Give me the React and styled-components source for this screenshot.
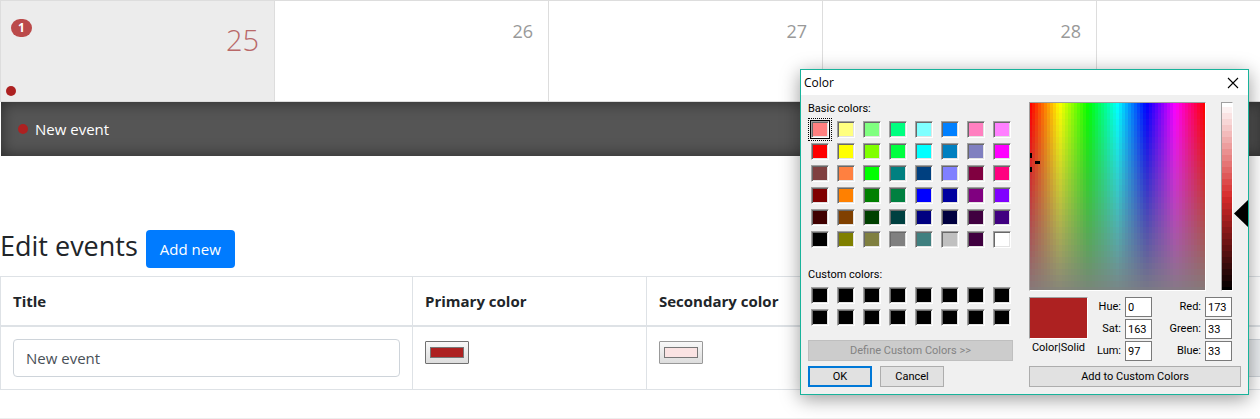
import React, { useState } from "react";
import styled, { createGlobalStyle } from "styled-components";

const GlobalStyle = createGlobalStyle`
  *, *::before, *::after { box-sizing: border-box; }
  body {
    margin: 0;
    background: #fff;
    color: #212529;
    font-family: "Open Sans", "Noto Sans", sans-serif;
    font-size: 15px;
    line-height: 24px;
    overflow: hidden;
  }
  button, input { font-family: inherit; }
`;

const Page = styled.main`
  position: relative;
  overflow: hidden;
`;

const Week = styled.div`
  display: grid;
  grid-template-columns: repeat(7, minmax(274px, 1fr));
  border-left: 1px solid #ddd;
`;

const Day = styled.div`
  display: flex;
  flex-direction: column;
  justify-content: space-between;
  height: 102px;
  padding: 18px 15px 5px 5px;
  border: solid #ddd;
  border-width: 1px 1px 1px 0;
  background: ${(p) => (p.$active ? "#ececec" : "#fff")};
`;

const DayTop = styled.div`
  display: flex;
  justify-content: space-between;
  align-items: flex-start;
`;

const DayNumber = styled.span`
  margin-left: auto;
  font-weight: ${(p) => (p.$active ? 300 : 400)};
  font-size: ${(p) => (p.$active ? "29px" : "18px")};
  line-height: ${(p) => (p.$active ? "42px" : "24px")};
  color: ${(p) => (p.$active ? "#b96868" : "#999")};
`;

const Badge = styled.span`
  margin-left: 5px;
  padding: 3px 7px;
  border-radius: 10px;
  background: #bb4a4a;
  color: #fff;
  font-size: 12px;
  font-weight: 700;
  line-height: 12px;
`;

const Dot = styled.span`
  flex: none;
  width: 10px;
  height: 10px;
  border-radius: 50%;
  background: #ad2121;
`;

const EventBar = styled.div`
  display: flex;
  align-items: center;
  gap: 7px;
  height: 54px;
  margin-left: 1px;
  padding: 0 17px;
  background: #555;
  box-shadow: inset 0 0 15px rgba(0, 0, 0, 0.5);
`;

const EventLink = styled.a`
  color: #fff;
  text-decoration: none;
`;

const Heading = styled.h3`
  display: flex;
  align-items: flex-start;
  gap: 8px;
  margin: 74px 0 8px;
  font-size: 27px;
  font-weight: 500;
  line-height: 32px;
`;

const AddButton = styled.button`
  height: 38px;
  padding: 0 14px;
  border: 0;
  border-radius: 4px;
  background: #007bff;
  color: #fff;
  font-size: 15px;
`;

const Table = styled.table`
  width: 100%;
  table-layout: fixed;
  border-collapse: collapse;
  margin-bottom: 28px;
`;

const HeadCell = styled.th`
  width: ${(p) => p.$width};
  height: 49px;
  padding: 0 12px;
  border: 1px solid #dee2e6;
  border-right-width: ${(p) => (p.$last ? 0 : "1px")};
  border-bottom-width: 2px;
  text-align: left;
  font-weight: 700;
`;

const Cell = styled.td`
  padding: 12px ${(p) => (p.$last ? 0 : "12px")} 12px 12px;
  border: 1px solid #dee2e6;
  border-right-width: ${(p) => (p.$last ? 0 : "1px")};
  vertical-align: top;
`;

const TextInput = styled.input`
  display: block;
  width: 100%;
  height: 38px;
  padding: 0 12px;
  border: 1px solid #ced4da;
  border-radius: 4px;
  background: #fff;
  color: #495057;
  font-size: 15px;
  &:disabled {
    border-right: 0;
    border-radius: 4px 0 0 4px;
    background: #e9ecef;
  }
`;

const ColorInput = styled.input`
  display: block;
  width: 44px;
  height: 23px;
  margin-top: 2px;
  padding: 0;
  appearance: none;
  border: 1px solid ${(p) => (p.$open ? "#707070" : "#999")};
  border-radius: 1px;
  background: linear-gradient(#f8f8f8, #ddd);
  &::-webkit-color-swatch-wrapper { padding: 5px 4px; }
  &::-webkit-color-swatch { border: 1px solid #777; border-radius: 0; }
`;

const Footer = styled.footer`
  height: 1px;
  background: #eee;
`;

const Dialog = styled.section`
  position: absolute;
  top: 69px;
  right: 11px;
  width: 449px;
  border: 1px solid #18b39b;
  background: #f0f0f0;
  color: #000;
  box-shadow: 0 4px 18px rgba(0, 0, 0, 0.4);
  font-family: Roboto, "Liberation Sans", sans-serif;
  font-size: 11px;
  line-height: 14px;
`;

const TitleBar = styled.header`
  display: flex;
  align-items: center;
  justify-content: space-between;
  height: 25px;
  padding: 0 9px 0 3px;
  background: #fff;
  font-family: "Open Sans", sans-serif;
  font-size: 12px;
`;

const CloseButton = styled.button`
  display: flex;
  padding: 0;
  border: 0;
  background: none;
`;

const DialogBody = styled.div`
  display: flex;
  gap: 16px;
  padding: 7px;
`;

const Palette = styled.div`
  width: 205px;
`;

const Swatches = styled.fieldset`
  margin: 0 0 ${(p) => p.$after};
  padding: 0;
  border: 0;
  min-width: 0;
`;

const Legend = styled.legend`
  margin-bottom: 5px;
  padding: 0;
`;

const SwatchGrid = styled.div`
  display: grid;
  grid-template-columns: repeat(8, 18px);
  gap: 5px 8px;
  padding-left: 3px;
`;

const Swatch = styled.input`
  appearance: none;
  width: 18px;
  height: 17px;
  margin: 0;
  border: 1px solid;
  border-color: #a0a0a0 #fff #fff #a0a0a0;
  background: ${(p) => p.$color};
  box-shadow: inset 1px 1px #696969, inset -1px -1px #e3e3e3;
  &:checked {
    box-shadow: inset 1px 1px #696969, inset -1px -1px #e3e3e3, 0 0 0 1px #000;
    outline: 1px dotted #000;
    outline-offset: 2px;
  }
`;

const Actions = styled.div`
  display: flex;
  gap: 8px;
  margin-top: 5px;
`;

const DialogButton = styled.button`
  width: ${(p) => p.$width || "100%"};
  height: 21px;
  padding: 0;
  border: ${(p) => (p.$primary ? "2px solid #0078d7" : "1px solid #adadad")};
  background: #e1e1e1;
  color: #000;
  font-size: 11px;
  line-height: 14px;
  &:disabled {
    border-color: #bfbfbf;
    background: #ccc;
    color: #838383;
  }
`;

const Mixer = styled.div`
  flex: 1;
`;

const Gradients = styled.div`
  display: flex;
  gap: 15px;
  position: relative;
`;

const Sunken = styled.div`
  border: 1px solid;
  border-color: #a0a0a0 #fff #fff #a0a0a0;
  svg { display: block; }
`;

const Pointer = styled.svg`
  position: absolute;
  top: 98px;
  right: -7px;
`;

const Values = styled.div`
  display: flex;
  justify-content: space-between;
  margin: 6px 9px 5px 0;
`;

const Preview = styled.div`
  width: 59px;
  text-align: center;
`;

const PreviewColor = styled(Sunken)`
  height: 42px;
  margin-bottom: 2px;
  background: #ad2121;
`;

const Fields = styled.div`
  display: grid;
  grid-template-columns: 64px 80px;
  gap: 2px 0;
`;

const Field = styled.label`
  display: flex;
  align-items: center;
  justify-content: flex-end;
  gap: 4px;
`;

const NumberInput = styled.input`
  width: 27px;
  height: 20px;
  padding: 0 2px;
  border: 1px solid #7a7a7a;
  background: #fff;
  font-size: 11px;
`;

const BASIC = [
  "#ff8080", "#ffff80", "#80ff80", "#00ff80", "#80ffff", "#0080ff", "#ff80c0", "#ff80ff",
  "#ff0000", "#ffff00", "#80ff00", "#00ff40", "#00ffff", "#0080c0", "#8080c0", "#ff00ff",
  "#804040", "#ff8040", "#00ff00", "#008080", "#004080", "#8080ff", "#800040", "#ff0080",
  "#800000", "#ff8000", "#008000", "#008040", "#0000ff", "#0000a0", "#800080", "#8000ff",
  "#400000", "#804000", "#004000", "#004040", "#000080", "#000040", "#400040", "#400080",
  "#000000", "#808000", "#808040", "#808080", "#408080", "#c0c0c0", "#400040", "#ffffff",
];
const CUSTOM = Array(16).fill("#000000");

const FIELDS = [
  ["Hue:", "0"], ["Red:", "173"],
  ["Sat:", "163"], ["Green:", "33"],
  ["Lum:", "97"], ["Blue:", "33"],
];

const range = (n) => Array.from({ length: n }, (_, i) => i);

function Spectrum() {
  return (
    <svg width="175" height="187" shapeRendering="crispEdges" role="img" aria-label="Hue and saturation">
      {range(32).map((r) =>
        range(59).map((c) => (
          <rect
            key={`${r}-${c}`}
            x={c * 3 - 1}
            y={r * 6 - 2}
            width="3"
            height="6"
            fill={`hsl(${(c * 360) / 58}, ${100 - r * 3.05}%, 50%)`}
          />
        ))
      )}
      <path d="M0 50h2v5h-2zM0 64h2v5h-2zM5 58h5v3h-5z" fill="#000" />
    </svg>
  );
}

function Luminance() {
  return (
    <svg width="10" height="187" shapeRendering="crispEdges" role="img" aria-label="Luminance">
      {range(32).map((r) => (
        <rect key={r} x="0" y={r * 6 - 2} width="10" height="6" fill={`hsl(0, 68%, ${100 - (r * 100) / 31}%)`} />
      ))}
    </svg>
  );
}

function SwatchSet({ title, name, colors, selected, onSelect, after }) {
  return (
    <Swatches $after={after}>
      <Legend>{title}</Legend>
      <SwatchGrid>
        {colors.map((color, i) => (
          <Swatch
            key={i}
            type="radio"
            name={name}
            aria-label={color}
            $color={color}
            checked={selected === i}
            onChange={() => onSelect && onSelect(i)}
          />
        ))}
      </SwatchGrid>
    </Swatches>
  );
}

function ColorDialog() {
  const [basic, setBasic] = useState(0);
  return (
    <Dialog role="dialog" aria-label="Color">
      <TitleBar>
        <span>Color</span>
        <CloseButton aria-label="Close">
          <svg width="12" height="12" viewBox="0 0 12 12" stroke="#000" strokeWidth="1.1">
            <path d="M1 1l10 10M11 1L1 11" />
          </svg>
        </CloseButton>
      </TitleBar>
      <DialogBody>
        <Palette>
          <SwatchSet title="Basic colors:" name="basic" colors={BASIC} selected={basic} onSelect={setBasic} after="20px" />
          <SwatchSet title="Custom colors:" name="custom" colors={CUSTOM} after="14px" />
          <DialogButton disabled>Define Custom Colors &gt;&gt;</DialogButton>
          <Actions>
            <DialogButton $width="64px" $primary>OK</DialogButton>
            <DialogButton $width="64px">Cancel</DialogButton>
          </Actions>
        </Palette>
        <Mixer>
          <Gradients>
            <Sunken><Spectrum /></Sunken>
            <Sunken><Luminance /></Sunken>
            <Pointer width="14" height="27" viewBox="0 0 14 27">
              <path d="M0 13.500L14 0V27z" fill="#000" />
            </Pointer>
          </Gradients>
          <Values>
            <Preview>
              <PreviewColor />
              Color|Solid
            </Preview>
            <Fields>
              {FIELDS.map(([label, value]) => (
                <Field key={label}>
                  {label}
                  <NumberInput defaultValue={value} />
                </Field>
              ))}
            </Fields>
          </Values>
          <DialogButton>Add to Custom Colors</DialogButton>
        </Mixer>
      </DialogBody>
    </Dialog>
  );
}

export default function App() {
  return (
    <Page>
      <GlobalStyle />
      <Week>
        <Day $active>
          <DayTop>
            <Badge>1</Badge>
            <DayNumber $active>25</DayNumber>
          </DayTop>
          <Dot />
        </Day>
        {[26, 27, 28].map((n) => (
          <Day key={n}>
            <DayTop><DayNumber>{n}</DayNumber></DayTop>
          </Day>
        ))}
        <Day />
      </Week>
      <EventBar>
        <Dot />
        <EventLink href="#event">New event</EventLink>
      </EventBar>
      <Heading>
        Edit events
        <AddButton>Add new</AddButton>
      </Heading>
      <Table>
        <thead>
          <tr>
            <HeadCell $width="412px">Title</HeadCell>
            <HeadCell $width="234px">Primary color</HeadCell>
            <HeadCell $width="234px">Secondary color</HeadCell>
            <HeadCell as="td" $last />
          </tr>
        </thead>
        <tbody>
          <tr>
            <Cell><TextInput aria-label="Title" defaultValue="New event" /></Cell>
            <Cell><ColorInput type="color" aria-label="Primary color" defaultValue="#ad2121" $open /></Cell>
            <Cell><ColorInput type="color" aria-label="Secondary color" defaultValue="#fae3e3" /></Cell>
            <Cell $last><TextInput aria-label="Date" disabled /></Cell>
          </tr>
        </tbody>
      </Table>
      <Footer />
      <ColorDialog />
    </Page>
  );
}
